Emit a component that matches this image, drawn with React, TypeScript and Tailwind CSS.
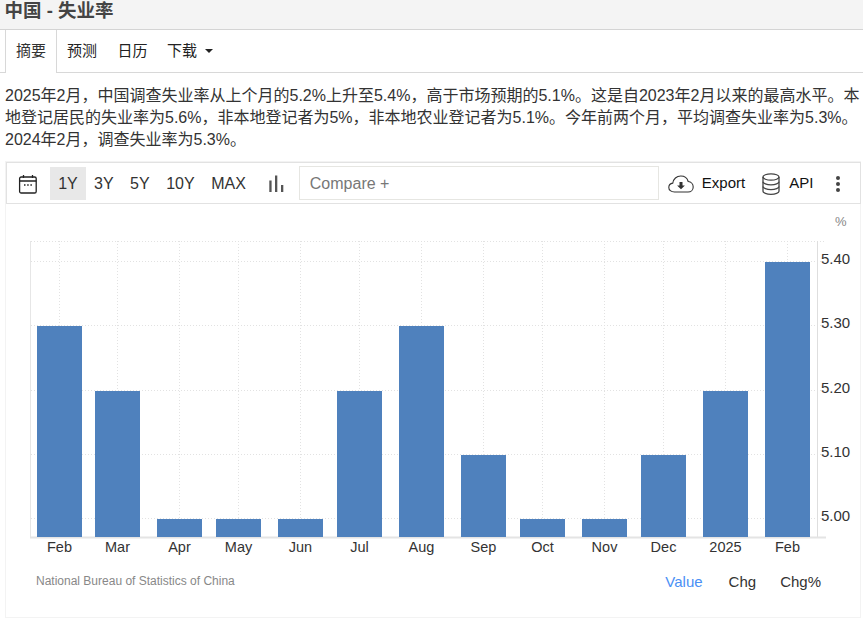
const bars = [
  { label: "Feb", x: 37, top: 326 },
  { label: "Mar", x: 95, top: 391 },
  { label: "Apr", x: 157, top: 519 },
  { label: "May", x: 216, top: 519 },
  { label: "Jun", x: 278, top: 519 },
  { label: "Jul", x: 337, top: 391 },
  { label: "Aug", x: 399, top: 326 },
  { label: "Sep", x: 461, top: 455 },
  { label: "Oct", x: 520, top: 519 },
  { label: "Nov", x: 582, top: 519 },
  { label: "Dec", x: 641, top: 455 },
  { label: "2025", x: 703, top: 391 },
  { label: "Feb", x: 765, top: 262 },
]

const yTicks = [
  { label: "5.40", y: 261.5 },
  { label: "5.30", y: 325.5 },
  { label: "5.20", y: 390.5 },
  { label: "5.10", y: 454.5 },
  { label: "5.00", y: 518.5 },
]

const ranges = ["3Y", "5Y", "10Y", "MAX"]

function Chart() {
  return (
    <svg width="855" height="360" viewBox="6 204 855 360" className="block">
      {yTicks.concat({ label: "", y: 241.5 }).map((t) => (
        <line key={t.y} x1="31" x2="826" y1={t.y} y2={t.y} stroke="#e2e2e2" strokeDasharray="1 2" />
      ))}
      {bars.map((b) => (
        <line key={b.x} x1={b.x + 22.5} x2={b.x + 22.5} y1="241" y2="537" stroke="#e2e2e2" strokeDasharray="1 2" />
      ))}
      <line x1="30.5" x2="30.5" y1="241" y2="537" stroke="#e6e6e6" />
      <line x1="817.5" x2="817.5" y1="241" y2="537" stroke="#dedede" />
      <line x1="30" x2="826" y1="537.5" y2="537.5" stroke="#e4e4e4" strokeWidth="2" />
      {bars.map((b) => (
        <rect key={b.x} x={b.x} y={b.top} width="45" height={537 - b.top} fill="#4f81bd" />
      ))}
      {bars.map((b) => (
        <text key={b.x} x={b.x + 22.5} y="552" textAnchor="middle" fontSize="14.5" fill="#333333">
          {b.label}
        </text>
      ))}
      {yTicks.map((t) => (
        <text key={t.label} x="821" y={t.y + 2.5} fontSize="15" fill="#333333">
          {t.label}
        </text>
      ))}
      <text x="835" y="226" fontSize="13" fill="#888888">
        %
      </text>
    </svg>
  )
}

function CalendarIcon() {
  return (
    <svg width="20" height="20" viewBox="0 0 20 20" fill="none" stroke="#222" strokeWidth="1.3">
      <rect x="1.6" y="3" width="16.6" height="16" rx="1.6" />
      <path d="M1.6 7h16.6M5.5 1v3M14.500 1v3" />
      <path d="M6 11h1.500M9.200 11h1.500M12.400 11h1.500" strokeWidth="1.600" />
    </svg>
  )
}

function BarsIcon() {
  return (
    <svg width="16" height="18" viewBox="0 0 16 18" fill="#555">
      <rect x="1.300" y="5.500" width="2.300" height="11.500" />
      <rect x="7" y="0.500" width="2.300" height="16.500" />
      <rect x="13" y="10" width="2.300" height="7" />
    </svg>
  )
}

function CloudIcon() {
  return (
    <svg width="26" height="18" viewBox="0 0 26 18" fill="none" stroke="#333" strokeWidth="1.100">
      <path d="M6.500 17C3 17 .8 15 .8 12.400c0-2.300 1.700-4 4-4.300C5.300 4 8.600 1 12.800 1c3.600 0 6.500 2.300 7.400 5.500 2.900.3 5 2.700 5 5.400 0 2.900-2.300 5.100-5.200 5.100z" />
      <path d="M11.500 7h3v3.500h2.400l-3.900 3.700-3.900-3.700h2.400z" fill="#333" stroke="none" />
    </svg>
  )
}

function DatabaseIcon() {
  return (
    <svg width="18" height="22" viewBox="0 0 18 22" fill="none" stroke="#444" strokeWidth="1.300">
      <ellipse cx="9" cy="4" rx="8" ry="3.200" />
      <path d="M1 4v14.200c0 1.700 3.600 3.100 8 3.100s8-1.400 8-3.100V4" />
      <path d="M1 8.700c0 1.700 3.600 3.100 8 3.100s8-1.400 8-3.100M1 13.500c0 1.700 3.600 3.100 8 3.100s8-1.400 8-3.100" />
    </svg>
  )
}

export default function App() {
  return (
    <div className="w-[863px] h-[620px] overflow-hidden bg-white text-[#333333] font-['Liberation_Sans','Noto_Sans_CJK_SC',sans-serif]">
      <div className="h-[30px] bg-[#f4f4f4] border-b border-[#d4d4d4] pl-[4.5px] overflow-hidden">
        <h1 className="text-[18.5px] leading-[21px] font-bold text-[#444444]">中国 - 失业率</h1>
      </div>

      <div className="flex h-[43px] pl-[5px] border-b border-[#d8d8d8] text-[15px]">
        <div className="h-[43px] w-[52px] flex items-center justify-center bg-white border-x border-[#d8d8d8]">摘要</div>
        <div className="w-[50px] flex items-center justify-center text-[#222222]">预测</div>
        <div className="w-[51px] flex items-center justify-center text-[#222222]">日历</div>
        <div className="flex items-center gap-[8px] pl-[9px] text-[#222222]">
          下载
          <span className="w-0 h-0 border-x-[4px] border-x-transparent border-t-[4px] border-t-[#222222]" />
        </div>
      </div>

      <p className="pl-[5px] pt-[12px] text-[16px] leading-[22px] whitespace-nowrap">
        2025年2月，中国调查失业率从上个月的5.2%上升至5.4%，高于市场预期的5.1%。这是自2023年2月以来的最高水平。本
        <br />
        地登记居民的失业率为5.6%，非本地登记者为5%，非本地农业登记者为5.1%。今年前两个月，平均调查失业率为5.3%。
        <br />
        2024年2月，调查失业率为5.3%。
      </p>

      <div className="ml-[5px] mt-[10px] w-[856px] h-[457px] border border-[#f3f3f3]">
        <div className="h-[42px] w-[855px] flex items-center border border-[#e2e2e2] pt-[1px] text-[16px]">
          <div className="w-[11px]" />
          <CalendarIcon />
          <div className="ml-[12px] w-[36px] h-[33px] flex items-center justify-center bg-[#e8e8e8]">1Y</div>
          <div className="flex items-center gap-[16.5px] ml-[8px]">
            {ranges.map((r) => (
              <span key={r}>{r}</span>
            ))}
          </div>
          <div className="ml-[22px]">
            <BarsIcon />
          </div>
          <div className="ml-[15px] -mt-[1px] w-[360px] h-[34px] flex items-center border border-[#e6e6e2] pl-[10px] text-[#777777]">
            <span className="mt-[1px]">Compare +</span>
          </div>
          <div className="ml-[9px]">
            <CloudIcon />
          </div>
          <span className="ml-[8px] text-[15px] text-[#111111]">Export</span>
          <div className="ml-[17px]">
            <DatabaseIcon />
          </div>
          <span className="ml-[9px] text-[15px] text-[#111111]">API</span>
          <div className="ml-[23px] flex flex-col gap-[2px]">
            <span className="w-[4px] h-[4px] rounded-full bg-[#444444]" />
            <span className="w-[4px] h-[4px] rounded-full bg-[#444444]" />
            <span className="w-[4px] h-[4px] rounded-full bg-[#444444]" />
          </div>
        </div>

        <Chart />

        <div className="flex items-center justify-between mt-[7px] pl-[30px] pr-[39px]">
          <span className="text-[12px] pb-[2px] text-[#888888]">National Bureau of Statistics of China</span>
          <div className="flex text-[15px]">
            <span className="text-[#4a90f5]">Value</span>
            <span className="ml-[26px]">Chg</span>
            <span className="ml-[24px]">Chg%</span>
          </div>
        </div>
      </div>
    </div>
  )
}
